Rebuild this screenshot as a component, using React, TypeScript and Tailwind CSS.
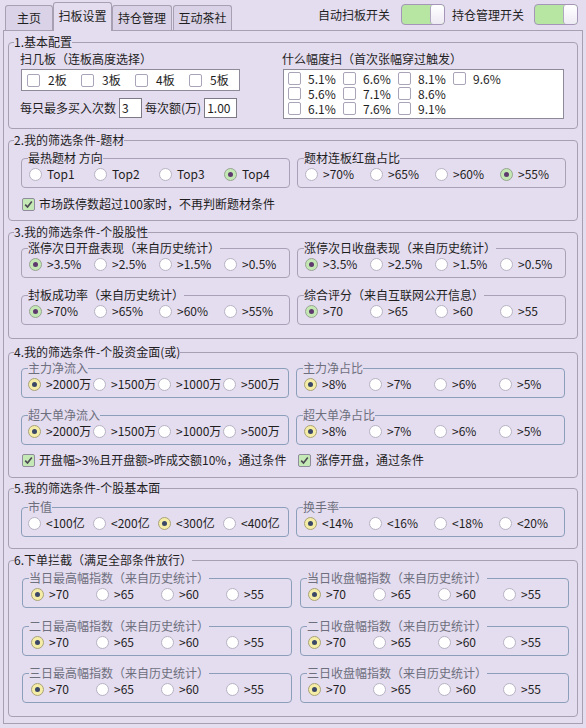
import React from 'react';

type V = 'g' | 'y';

function Radio({ on, v }: { on?: boolean; v: V }) {
  if (!on) return <span className="w-[13px] h-[13px] shrink-0 rounded-full border border-[#b7b3c4] bg-white" />;
  return (
    <span
      className={
        v === 'g'
          ? 'w-[13px] h-[13px] shrink-0 rounded-full border border-[#98a394] bg-[#c4e8b3] flex items-center justify-center'
          : 'w-[13px] h-[13px] shrink-0 rounded-full border border-[#a9a27a] bg-[#f5eda5] flex items-center justify-center'
      }
    >
      <span className={v === 'g' ? 'w-[5px] h-[5px] rounded-full bg-[#5f3a6f]' : 'w-[5px] h-[5px] rounded-full bg-[#3a4767]'} />
    </span>
  );
}

function Check({ on }: { on?: boolean }) {
  if (!on) return <span className="w-[13px] h-[13px] shrink-0 rounded-[2px] border border-[#aaa4b8] bg-white" />;
  return (
    <span className="w-[13px] h-[13px] shrink-0 rounded-[2px] border border-[#8f8a9c] bg-[#c5e9b6] flex items-center justify-center">
      <svg width="9" height="9" viewBox="0 0 9 9">
        <path d="M1.2 4.6 L3.5 7 L7.8 1.4" fill="none" stroke="#4b4852" strokeWidth="1.6" />
      </svg>
    </span>
  );
}

function Group({
  title,
  opts,
  sel,
  v,
  blue,
  w = 'w-[268px]',
  pl = 'pl-[7px]',
}: {
  title: string;
  opts: string[];
  sel: number;
  v: V;
  blue?: boolean;
  w?: string;
  pl?: string;
}) {
  return (
    <fieldset className={`${w} h-[38px] shrink-0 rounded-[4px] border ${blue ? 'border-[#8c9fba]' : 'border-[#a9a2b6]'}`}>
      <legend className={`ml-[6px] leading-4 ${blue ? 'text-[#6d6f7d]' : 'text-[#1e1e1e]'}`}>{title}</legend>
      <div className={`-mt-[2px] h-[20px] flex items-center ${pl}`}>
        {opts.map((o, i) => (
          <div key={o} className="w-[65px] shrink-0 flex items-center gap-[5px] whitespace-nowrap">
            <Radio on={i === sel} v={v} />
            <span>{o}</span>
          </div>
        ))}
      </div>
    </fieldset>
  );
}

function Section({ title, h, mt, children }: { title: string; h: string; mt: string; children: React.ReactNode }) {
  return (
    <fieldset className={`mx-[4px] ${mt} ${h} shrink-0 rounded-[4px] border border-[#a7a0b3]`}>
      <legend className="ml-[5px] leading-4">{title}</legend>
      {children}
    </fieldset>
  );
}

function Toggle() {
  return (
    <div className="w-[44px] h-[21px] rounded-[4px] border border-[#a596b9] bg-[#b6e6a2] flex justify-end overflow-hidden">
      <div className="w-[14px] h-full rounded-[3px] border-l border-[#b0a8c0] bg-gradient-to-b from-white to-[#eeeaf4]" />
    </div>
  );
}

export default function App() {
  const pct = [
    ['5.1%', '6.6%', '8.1%', '9.6%'],
    ['5.6%', '7.1%', '8.6%', ''],
    ['6.1%', '7.6%', '9.1%', ''],
  ];
  const idx = ['>70', '>65', '>60', '>55'];
  return (
    <div className="w-[586px] h-[728px] overflow-hidden bg-[#e4dcef] px-[3px] text-[12px] leading-4 text-[#1e1e1e] font-['Noto_Sans_CJK_SC',sans-serif]">
      {/* top bar */}
      <div className="h-[30px] flex justify-between">
        <div className="flex items-end h-[30px] pl-[2px]">
          <div className="w-[48px] h-[25px] rounded-t-[3px] border border-b-0 border-[#a7a0b3] bg-[#dad2e6] flex items-center justify-center">主页</div>
          <div className="relative z-10 -mb-[1px] w-[59px] h-[29px] rounded-t-[3px] border border-b-0 border-[#a7a0b3] bg-[#e4dcef] flex items-center justify-center pb-[2px]">扫板设置</div>
          <div className="w-[60px] h-[25px] rounded-t-[3px] border border-b-0 border-[#a7a0b3] bg-[#dad2e6] flex items-center justify-center">持仓管理</div>
          <div className="ml-[1px] w-[59px] h-[25px] rounded-t-[3px] border border-b-0 border-[#a7a0b3] bg-[#dad2e6] flex items-center justify-center">互动茶社</div>
        </div>
        <div className="flex items-center h-[21px] mt-[4px] pr-[5px]">
          <span>自动扫板开关</span>
          <span className="ml-[11px]"><Toggle /></span>
          <span className="ml-[7px]">持仓管理开关</span>
          <span className="ml-[10px]"><Toggle /></span>
        </div>
      </div>

      {/* pane */}
      <div className="h-[694px] border border-[#a7a0b3] pt-[3px] flex flex-col">
        <Section title="1.基本配置" h="h-[95px]" mt="mt-0">
          <div className="flex pl-[12px] pt-[1px]">
            <div className="w-[219px] shrink-0">
              <div className="h-4 -ml-[1px]">扫几板（连板高度选择）</div>
              <div className="mt-[2px] h-[22px] border border-[#8e8a99] bg-white flex items-center pl-[5px]">
                {['2板', '3板', '4板', '5板'].map((t) => (
                  <div key={t} className="w-[54px] shrink-0 flex items-center gap-[8px]">
                    <Check />
                    <span>{t}</span>
                  </div>
                ))}
              </div>
              <div className="mt-[7px] flex items-center h-[20px] whitespace-nowrap">
                <span className="-ml-[1px]">每只最多买入次数</span>
                <span className="ml-[3px] w-[23px] h-[20px] border border-[#7d7a86] bg-white pl-[2px] leading-[18px]">3</span>
                <span className="ml-[3px]">每次额(万)</span>
                <span className="ml-[3px] w-[33px] h-[20px] border border-[#7d7a86] bg-white pl-[2px] leading-[18px]">1.00</span>
              </div>
            </div>
            <div className="ml-[43px] w-[281px] shrink-0">
              <div className="h-4 -ml-[1px]">什么幅度扫（首次张幅穿过触发）</div>
              <div className="mt-[2px] h-[50px] border border-[#8e8a99] bg-white pl-[4px] pt-[1px] flex flex-col">
                {pct.map((row, r) => (
                  <div key={r} className="h-[15px] leading-[14px] flex items-center">
                    {row.map((c, i) =>
                      c ? (
                        <div key={i} className="w-[55px] shrink-0 flex items-center gap-[7px]">
                          <Check />
                          <span>{c}</span>
                        </div>
                      ) : (
                        <div key={i} className="w-[55px] shrink-0" />
                      )
                    )}
                  </div>
                ))}
              </div>
            </div>
          </div>
        </Section>

        <Section title="2.我的筛选条件-题材" h="h-[89px]" mt="mt-[3px]">
          <div className="flex gap-[7px] pl-[12px] mt-[2px]">
            <Group title="最热题材 方向" opts={['Top1', 'Top2', 'Top3', 'Top4']} sel={3} v="g" />
            <Group title="题材连板红盘占比" opts={['>70%', '>65%', '>60%', '>55%']} sel={3} v="g" />
          </div>
          <div className="mt-[8px] pl-[13px] flex items-center gap-[4px] h-4">
            <Check on />
            <span>市场跌停数超过100家时，不再判断题材条件</span>
          </div>
        </Section>

        <Section title="3.我的筛选条件-个股股性" h="h-[115px]" mt="mt-[3px]">
          <div className="flex gap-[7px] pl-[12px]">
            <Group title="涨停次日开盘表现（来自历史统计）" opts={['>3.5%', '>2.5%', '>1.5%', '>0.5%']} sel={0} v="g" />
            <Group title="涨停次日收盘表现（来自历史统计）" opts={['>3.5%', '>2.5%', '>1.5%', '>0.5%']} sel={0} v="g" />
          </div>
          <div className="flex gap-[7px] pl-[12px] mt-[9px]">
            <Group title="封板成功率（来自历史统计）" opts={['>70%', '>65%', '>60%', '>55%']} sel={0} v="g" />
            <Group title="综合评分（来自互联网公开信息）" opts={idx} sel={0} v="g" />
          </div>
        </Section>

        <Section title="4.我的筛选条件-个股资金面(或)" h="h-[134px]" mt="mt-[5px]">
          <div className="flex gap-[7px] pl-[12px]">
            <Group title="主力净流入" opts={['>2000万', '>1500万', '>1000万', '>500万']} sel={0} v="y" blue pl="pl-[6px]" />
            <Group title="主力净占比" opts={['>8%', '>7%', '>6%', '>5%']} sel={0} v="y" blue />
          </div>
          <div className="flex gap-[7px] pl-[12px] mt-[9px]">
            <Group title="超大单净流入" opts={['>2000万', '>1500万', '>1000万', '>500万']} sel={0} v="y" blue pl="pl-[6px]" />
            <Group title="超大单净占比" opts={['>8%', '>7%', '>6%', '>5%']} sel={0} v="y" blue />
          </div>
          <div className="mt-[7px] pl-[13px] flex items-center h-4">
            <div className="w-[276px] shrink-0 flex items-center gap-[4px]">
              <Check on />
              <span>开盘幅&gt;3%且开盘额&gt;昨成交额10%，通过条件</span>
            </div>
            <div className="flex items-center gap-[5px]">
              <Check on />
              <span>涨停开盘，通过条件</span>
            </div>
          </div>
        </Section>

        <Section title="5.我的筛选条件-个股基本面" h="h-[69px]" mt="mt-[2px]">
          <div className="flex gap-[7px] pl-[12px] mt-[3px]">
            <Group title="市值" opts={['<100亿', '<200亿', '<300亿', '<400亿']} sel={2} v="y" blue pl="pl-[6px]" />
            <Group title="换手率" opts={['<14%', '<16%', '<18%', '<20%']} sel={0} v="y" blue />
          </div>
        </Section>

        <Section title="6.下单拦截（满足全部条件放行）" h="h-[165px]" mt="mt-[3px]">
          <div className="flex gap-[8px] pl-[13px] mt-[2px]">
            <Group title="当日最高幅指数（来自历史统计）" opts={idx} sel={0} v="y" blue pl="pl-[8px]" />
            <Group title="当日收盘幅指数（来自历史统计）" opts={idx} sel={0} v="y" blue w="w-[269px]" />
          </div>
          <div className="flex gap-[8px] pl-[13px] mt-[10px]">
            <Group title="二日最高幅指数（来自历史统计）" opts={idx} sel={0} v="y" blue pl="pl-[8px]" />
            <Group title="二日收盘幅指数（来自历史统计）" opts={idx} sel={0} v="y" blue w="w-[269px]" />
          </div>
          <div className="flex gap-[8px] pl-[13px] mt-[9px]">
            <Group title="三日最高幅指数（来自历史统计）" opts={idx} sel={0} v="y" blue pl="pl-[8px]" />
            <Group title="三日收盘幅指数（来自历史统计）" opts={idx} sel={0} v="y" blue w="w-[269px]" />
          </div>
        </Section>
      </div>
    </div>
  );
}
